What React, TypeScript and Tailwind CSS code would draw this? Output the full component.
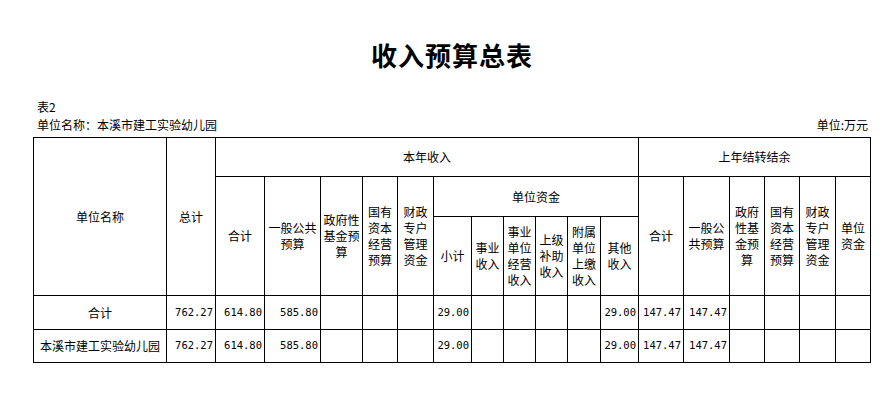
import React from "react";

const H = ({ c, children }: { c: string; children?: React.ReactNode }) => (
  <div className={`bg-white flex items-center justify-center text-center leading-[16px] ${c}`}>
    <div>{children}</div>
  </div>
);

const N = ({ v }: { v?: string }) => (
  <div className="bg-white flex items-center justify-end pr-[2px] text-[10.5px] font-['DejaVu_Sans_Mono',monospace]">
    {v ?? ""}
  </div>
);

const T = ({ v }: { v: string }) => (
  <div className="bg-white flex items-center justify-center whitespace-nowrap">{v}</div>
);

const Row = ({ name }: { name: string }) => (
  <>
    <T v={name} />
    <N v="762.27" />
    <N v="614.80" />
    <N v="585.80" />
    <N />
    <N />
    <N />
    <N v="29.00" />
    <N />
    <N />
    <N />
    <N />
    <N v="29.00" />
    <N v="147.47" />
    <N v="147.47" />
    <N />
    <N />
    <N />
    <N />
  </>
);

export default function App() {
  return (
    <div className="w-[894px] h-[411px] bg-white text-black text-[12px] font-['Noto_Sans_CJK_SC',sans-serif] overflow-hidden">
      <div className="ml-[33px] w-[838px] flex flex-col">
        <div className="mt-[37px] h-[36px] leading-[36px] text-center text-[26px] font-bold tracking-[1px]">
          收入预算总表
        </div>
        <div className="mt-[26px] h-[16px] leading-[16px] pl-[4px]">表2</div>
        <div className="mt-[2px] h-[16px] leading-[16px] pl-[4px] pr-[3px] flex justify-between">
          <span>单位名称：本溪市建工实验幼儿园</span>
          <span>单位:万元</span>
        </div>
        <div className="mt-[4px] grid gap-px bg-black p-px grid-cols-[132px_48px_48px_55px_41px_34px_35px_37px_31px_31px_31px_32px_37px_44px_45px_34px_34px_35px_34px] grid-rows-[38px_39px_78px_33px_32px]">
          <H c="col-start-1 row-start-1 row-span-3">单位名称</H>
          <H c="col-start-2 row-start-1 row-span-3">总计</H>
          <H c="col-start-3 col-span-11 row-start-1">本年收入</H>
          <H c="col-start-14 col-span-6 row-start-1">上年结转结余</H>

          <H c="col-start-3 row-start-2 row-span-2">合计</H>
          <H c="col-start-4 row-start-2 row-span-2">一般公共<br />预算</H>
          <H c="col-start-5 row-start-2 row-span-2">政府性<br />基金预<br />算</H>
          <H c="col-start-6 row-start-2 row-span-2">国有<br />资本<br />经营<br />预算</H>
          <H c="col-start-7 row-start-2 row-span-2">财政<br />专户<br />管理<br />资金</H>
          <H c="col-start-8 col-span-6 row-start-2">单位资金</H>

          <H c="col-start-8 row-start-3">小计</H>
          <H c="col-start-9 row-start-3">事业<br />收入</H>
          <H c="col-start-10 row-start-3">事业<br />单位<br />经营<br />收入</H>
          <H c="col-start-11 row-start-3">上级<br />补助<br />收入</H>
          <H c="col-start-12 row-start-3">附属<br />单位<br />上缴<br />收入</H>
          <H c="col-start-13 row-start-3">其他<br />收入</H>

          <H c="col-start-14 row-start-2 row-span-2">合计</H>
          <H c="col-start-15 row-start-2 row-span-2">一般公<br />共预算</H>
          <H c="col-start-16 row-start-2 row-span-2">政府<br />性基<br />金预<br />算</H>
          <H c="col-start-17 row-start-2 row-span-2">国有<br />资本<br />经营<br />预算</H>
          <H c="col-start-18 row-start-2 row-span-2">财政<br />专户<br />管理<br />资金</H>
          <H c="col-start-19 row-start-2 row-span-2">单位<br />资金</H>

          <Row name="合计" />
          <Row name="本溪市建工实验幼儿园" />
        </div>
      </div>
    </div>
  );
}
